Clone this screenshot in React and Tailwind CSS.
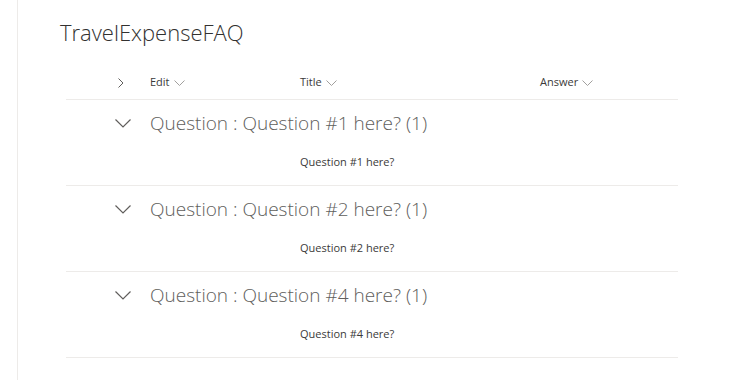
import React from "react";

const font = { fontFamily: '"Open Sans", "Noto Sans", sans-serif' };

const ChevronRight = () => (
  <svg width="6" height="10" viewBox="0 0 6 10" className="shrink-0">
    <path d="M0.5 0.5 L5 5 L0.5 9.5" fill="none" stroke="#605e5c" strokeWidth="1" />
  </svg>
);

const ChevronDownSmall = () => (
  <svg width="11" height="6" viewBox="0 0 11 6" className="ml-[4px] shrink-0">
    <path d="M0.5 0.5 L5.5 5.5 L10.5 0.5" fill="none" stroke="#a19f9d" strokeWidth="1" />
  </svg>
);

const ChevronDownBig = () => (
  <svg width="16" height="9" viewBox="0 0 16 9" className="shrink-0">
    <path d="M0.5 0.5 L8 8 L15.5 0.5" fill="none" stroke="#605e5c" strokeWidth="1.2" />
  </svg>
);

const groups = ["Question #1 here?", "Question #2 here?", "Question #4 here?"];

const HeaderCell = ({ label, className }) => (
  <div className={`flex items-center text-[11px] text-[#3b3a39] ${className}`}>
    {label}
    <ChevronDownSmall />
  </div>
);

export default function App() {
  return (
    <div className="min-h-screen bg-white pl-[17px]" style={font}>
      <div className="min-h-[380px] border-l border-[#edebe9] pl-[42px] pt-[17px]">
        <h1 className="text-[22px] font-light leading-[30px] text-[#323130]">
          TravelExpenseFAQ
        </h1>

        <div className="ml-[6px] mt-[19px] w-[612px]">
          <div className="flex h-[34px] items-center border-b border-[#edebe9]">
            <div className="w-[84px] pl-[52px]">
              <ChevronRight />
            </div>
            <HeaderCell label="Edit" className="w-[150px]" />
            <HeaderCell label="Title" className="w-[240px]" />
            <HeaderCell label="Answer" className="" />
          </div>

          {groups.map((q) => (
            <div key={q} className="border-b border-[#edebe9]">
              <div className="flex h-[46px] items-center">
                <div className="w-[84px] pl-[49px]">
                  <ChevronDownBig />
                </div>
                <div className="text-[19px] font-light text-[#605e5c]">
                  Question : {q} (1)
                </div>
              </div>
              <div className="flex h-[32px] items-center pl-[234px] text-[11px] text-[#3b3a39]">
                {q}
              </div>
              <div className="h-[7px]" />
            </div>
          ))}
        </div>
      </div>
    </div>
  );
}
